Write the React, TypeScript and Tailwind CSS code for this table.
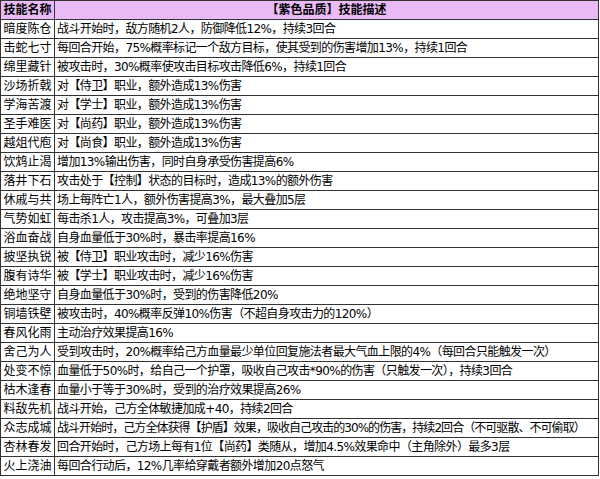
const rows: [string, string][] = [
  ["暗度陈仓", "战斗开始时，敌方随机2人，防御降低12%，持续3回合"],
  ["击蛇七寸", "每回合开始，75%概率标记一个敌方目标，使其受到的伤害增加13%，持续1回合"],
  ["绵里藏针", "被攻击时，30%概率使攻击目标攻击降低6%，持续1回合"],
  ["沙场折戟", "对【侍卫】职业，额外造成13%伤害"],
  ["学海苦渡", "对【学士】职业，额外造成13%伤害"],
  ["圣手难医", "对【尚药】职业，额外造成13%伤害"],
  ["越俎代庖", "对【尚食】职业，额外造成13%伤害"],
  ["饮鸩止渴", "增加13%输出伤害，同时自身承受伤害提高6%"],
  ["落井下石", "攻击处于【控制】状态的目标时，造成13%的额外伤害"],
  ["休戚与共", "场上每阵亡1人，额外伤害提高3%，最大叠加5层"],
  ["气势如虹", "每击杀1人，攻击提高3%，可叠加3层"],
  ["浴血奋战", "自身血量低于30%时，暴击率提高16%"],
  ["披坚执锐", "被【侍卫】职业攻击时，减少16%伤害"],
  ["腹有诗华", "被【学士】职业攻击时，减少16%伤害"],
  ["绝地坚守", "自身血量低于30%时，受到的伤害降低20%"],
  ["铜墙铁壁", "被攻击时，40%概率反弹10%伤害（不超自身攻击力的120%）"],
  ["春风化雨", "主动治疗效果提高16%"],
  ["舍己为人", "受到攻击时，20%概率给己方血量最少单位回复施法者最大气血上限的4%（每回合只能触发一次）"],
  ["处变不惊", "血量低于50%时，给自己一个护罩，吸收自己攻击*90%的伤害（只触发一次），持续3回合"],
  ["枯木逢春", "血量小于等于30%时，受到的治疗效果提高26%"],
  ["料敌先机", "战斗开始，己方全体敏捷加成+40，持续2回合"],
  ["众志成城", "战斗开始时，己方全体获得【护盾】效果，吸收自己攻击的30%的伤害，持续2回合（不可驱散、不可偷取）"],
  ["杏林春发", "回合开始时，己方场上每有1位【尚药】类随从，增加4.5%效果命中（主角除外）最多3层"],
  ["火上浇油", "每回合行动后，12%几率给穿戴者额外增加20点怒气"],
];

export default function App() {
  return (
    <div className="w-[600px] h-[479px] bg-white overflow-hidden font-['DejaVu_Sans','Noto_Sans_CJK_SC',sans-serif] text-[12px] leading-none text-black">
      <table className="w-[599px] border-collapse table-fixed">
        <colgroup>
          <col className="w-[54px]" />
          <col />
        </colgroup>
        <thead>
          <tr className="h-[19px] bg-[#e9baf5]">
            <th className="border border-[#333] font-bold text-center p-0">技能名称</th>
            <th className="border border-[#333] font-bold text-center p-0">【紫色品质】技能描述</th>
          </tr>
        </thead>
        <tbody>
          {rows.map(([name, desc]) => (
            <tr key={name} className="h-[19px]">
              <td className="border border-[#333] text-center p-0 whitespace-nowrap">{name}</td>
              <td
                className={
                  name === "众志成城"
                    ? "border border-[#333] pl-[2px] p-0 whitespace-nowrap overflow-hidden tracking-[-0.95px]"
                    : "border border-[#333] pl-[2px] p-0 whitespace-nowrap overflow-hidden tracking-[-0.6px]"
                }
              >
                {desc}
              </td>
            </tr>
          ))}
        </tbody>
      </table>
    </div>
  );
}
